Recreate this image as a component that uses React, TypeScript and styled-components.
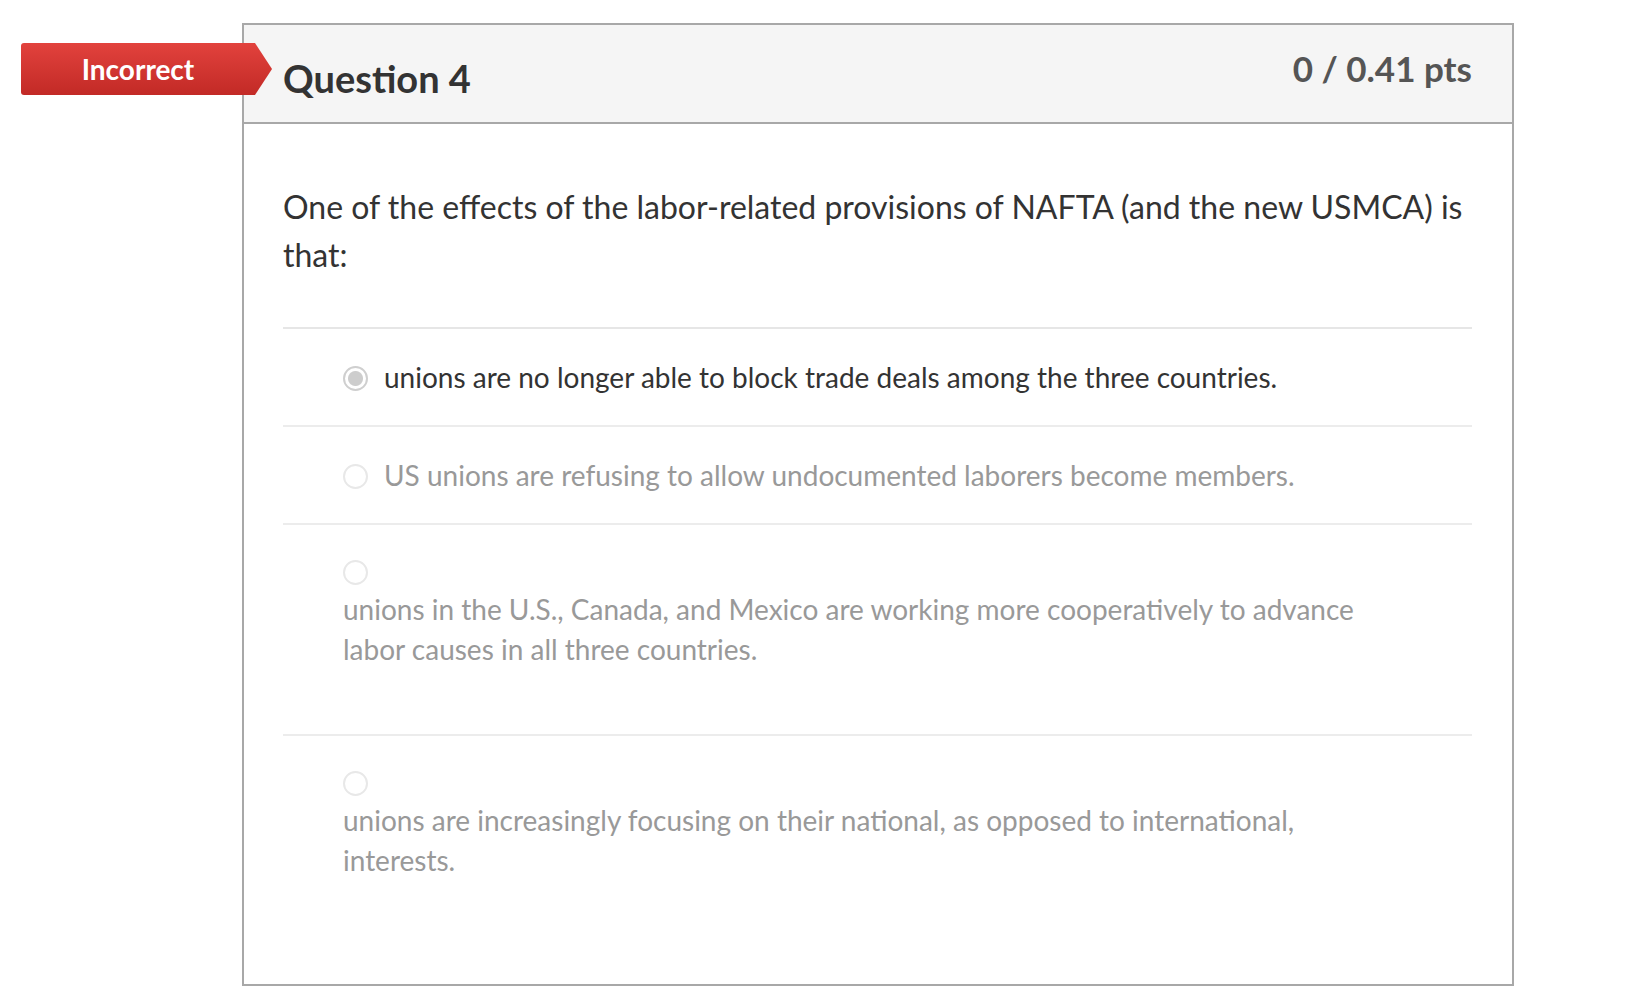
import styled, { createGlobalStyle } from "styled-components";

const GlobalStyle = createGlobalStyle`
  body {
    margin: 0;
    background: #fff;
    font-family: Lato, "Open Sans", sans-serif;
  }
`;

const Page = styled.div`
  position: relative;
  padding: 23px 0 12px 242px;
`;

const Badge = styled.div`
  position: absolute;
  left: 21px;
  top: 43px;
  width: 251px;
  height: 52px;
  padding-right: 17px;
  box-sizing: border-box;
  display: flex;
  align-items: center;
  justify-content: center;
  color: #fff;
  font-size: 28px;
  font-weight: 700;
  background: linear-gradient(#e2423d, #c22a26);
  clip-path: polygon(0 0, 234px 0, 100% 50%, 234px 100%, 0 100%);
  border-radius: 3px 0 0 3px;
  z-index: 2;
`;

const Card = styled.div`
  width: 1272px;
  height: 963px;
  box-sizing: border-box;
  border: 2px solid #a8a8a8;
  background: #fff;
`;

const Header = styled.div`
  display: flex;
  justify-content: space-between;
  align-items: flex-start;
  height: 99px;
  box-sizing: border-box;
  padding: 22px 40px 0 39px;
  background: #f5f5f5;
  border-bottom: 2px solid #a8a8a8;
`;

const Title = styled.h2`
  margin: 9px 0 0;
  font-size: 38px;
  line-height: 44px;
  font-weight: 700;
  color: #333;
`;

const Points = styled.div`
  font-size: 35px;
  line-height: 43px;
  font-weight: 700;
  color: #555;
`;

const Body = styled.div`
  padding: 59px 40px 0 39px;
`;

const QuestionText = styled.p`
  margin: 0 0 48px;
  font-size: 32px;
  line-height: 48px;
  color: #333;
`;

const Answers = styled.div`
  border-top: 2px solid #e6e6e6;
`;

const Answer = styled.div<{ $stacked?: boolean }>`
  display: flex;
  flex-direction: ${(p) => (p.$stacked ? "column" : "row")};
  align-items: ${(p) => (p.$stacked ? "flex-start" : "center")};
  gap: ${(p) => (p.$stacked ? "0" : "16px")};
  padding: 28px 60px 28px 60px;
  border-bottom: 2px solid #ececec;
  &:last-child {
    border-bottom: none;
  }
`;

const Radio = styled.span<{ $checked?: boolean }>`
  flex: none;
  width: 25px;
  height: 25px;
  margin: 7px 0 4px;
  box-sizing: border-box;
  border-radius: 50%;
  border: 2px solid ${(p) => (p.$checked ? "#cfcfcf" : "#e8e8e8")};
  background: ${(p) =>
    p.$checked ? "radial-gradient(circle, #cdcdcd 0 7px, #fff 8px)" : "#fff"};
`;

const Label = styled.span<{ $checked?: boolean; $stacked?: boolean }>`
  font-size: 28px;
  line-height: 40px;
  color: ${(p) => (p.$checked ? "#333" : "#999")};
  max-width: 1030px;
  margin-bottom: ${(p) => (p.$stacked ? "37px" : "0")};
`;

const answers = [
  {
    text: "unions are no longer able to block trade deals among the three countries.",
    checked: true,
  },
  {
    text: "US unions are refusing to allow undocumented laborers become members.",
  },
  {
    text: "unions in the U.S., Canada, and Mexico are working more cooperatively to advance labor causes in all three countries.",
    stacked: true,
  },
  {
    text: "unions are increasingly focusing on their national, as opposed to international, interests.",
    stacked: true,
  },
];

function App() {
  return (
    <Page>
      <GlobalStyle />
      <Badge>Incorrect</Badge>
      <Card>
        <Header>
          <Title>Question 4</Title>
          <Points>0 / 0.41 pts</Points>
        </Header>
        <Body>
          <QuestionText>
            One of the effects of the labor-related provisions of NAFTA (and the new USMCA) is
            that:
          </QuestionText>
          <Answers>
            {answers.map((a) => (
              <Answer key={a.text} $stacked={a.stacked}>
                <Radio $checked={a.checked} />
                <Label $checked={a.checked} $stacked={a.stacked}>
                  {a.text}
                </Label>
              </Answer>
            ))}
          </Answers>
        </Body>
      </Card>
    </Page>
  );
}

export default App;
